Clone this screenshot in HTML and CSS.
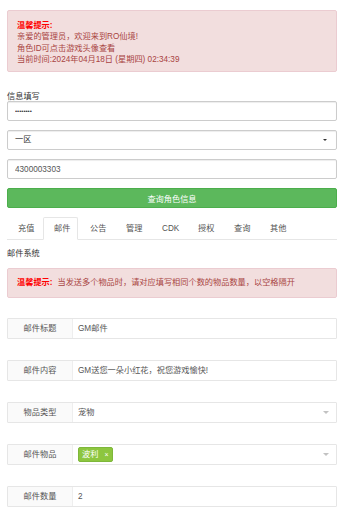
FILE: index.html
```html
<!DOCTYPE HTML>
<html>
<head>
    <meta charset="utf-8">
    <title>GM后台</title>
    <link rel="stylesheet" href="styles.css">
</head>
<body>
    <div class="container">
        <div class="alert alert-top">
            <div class="warn-title">温馨提示:</div>
            <div>亲爱的管理员，欢迎来到RO仙境!</div>
            <div>角色ID可点击游戏头像查看</div>
            <div>当前时间:2024年04月18日 (星期四) 02:34:39</div>
        </div>

        <label class="field-label">信息填写</label>
        <input type="password" class="form-control pwd" value="12345678">
        <div class="form-control select-box">
            <span>一区</span>
            <span class="caret"></span>
        </div>
        <input type="text" class="form-control" value="4300003303">
        <button class="btn-green">查询角色信息</button>

        <ul class="nav-tabs">
            <li>充值</li>
            <li class="active">邮件</li>
            <li>公告</li>
            <li>管理</li>
            <li>CDK</li>
            <li>授权</li>
            <li>查询</li>
            <li>其他</li>
        </ul>

        <div class="section-title">邮件系统</div>
        <div class="alert alert-tip">
            <span class="warn-title">温馨提示:</span>
            <span class="tip-text">当发送多个物品时，请对应填写相同个数的物品数量，以空格隔开</span>
        </div>

        <div class="form-item">
            <div class="item-label">邮件标题</div>
            <div class="item-input">GM邮件</div>
        </div>
        <div class="form-item">
            <div class="item-label">邮件内容</div>
            <div class="item-input">GM送您一朵小红花，祝您游戏愉快!</div>
        </div>
        <div class="form-item">
            <div class="item-label">物品类型</div>
            <div class="item-input">宠物<span class="edge"></span></div>
        </div>
        <div class="form-item">
            <div class="item-label">邮件物品</div>
            <div class="item-input"><span class="tag">波利<i>×</i></span><span class="edge"></span></div>
        </div>
        <div class="form-item">
            <div class="item-label">邮件数量</div>
            <div class="item-input">2</div>
        </div>
    </div>
</body>
</html>
```

FILE: styles.css
```css
*{
    box-sizing: border-box;
}
body{
    margin: 0;
    font-family: "Liberation Sans", "Noto Sans CJK SC", sans-serif;
    font-size: 8.2px;
    line-height: 11.4px;
    color: #333;
    background: #fff;
}
.container{
    padding: 10px 7px 0 7px;
}
.alert{
    background-color: #f2dede;
    border: 1px solid #ebccd1;
    border-radius: 2px;
    color: #a94442;
}
.alert-top{
    height: 62px;
    padding: 9px 9px;
    margin-bottom: 19px;
}
.warn-title{
    color: #f00;
    font-weight: bold;
}
.field-label{
    display: block;
    height: 10px;
    line-height: 11px;
    color: #333;
}
.form-control{
    display: block;
    width: 100%;
    height: 20px;
    margin: 0 0 9px 0;
    padding: 0 7px;
    border: 1px solid #ccc;
    border-radius: 2px;
    font-family: "Liberation Sans", "Noto Sans CJK SC", sans-serif;
    font-size: 8.2px;
    color: #555;
    background: #fff;
    box-shadow: inset 0 1px 1px rgba(0,0,0,.075);
}
.pwd{
    font-size: 6px;
    color: #333;
}
.select-box{
    display: flex;
    align-items: center;
    justify-content: space-between;
    color: #333;
}
.caret{
    width: 0;
    height: 0;
    border-left: 2px solid transparent;
    border-right: 2px solid transparent;
    border-top: 2px solid #333;
    margin-right: 2px;
}
.btn-green{
    display: block;
    width: 100%;
    height: 20px;
    border: 1px solid #4cae4c;
    border-radius: 2px;
    background: #5cb85c;
    color: #fff;
    font-family: "Liberation Sans", "Noto Sans CJK SC", sans-serif;
    font-size: 8.2px;
    padding: 0;
}
.nav-tabs{
    list-style: none;
    margin: 9px 0 0 0;
    padding: 0;
    display: flex;
    border-bottom: 1px solid #e6e6e6;
}
.nav-tabs li{
    width: 35px;
    margin-right: 1px;
    height: 23px;
    line-height: 22px;
    padding-left: 10px;
    color: #555;
    border: 1px solid transparent;
    border-radius: 2px 2px 0 0;
    margin-bottom: -1px;
}
.nav-tabs li.active{
    border-color: #e6e6e6;
    border-bottom-color: #fff;
    background: #fff;
}
.section-title{
    margin-top: 8px;
    height: 11px;
}
.alert-tip{
    margin-top: 9px;
    height: 30px;
    padding: 0 9px;
    display: flex;
    align-items: center;
}
.tip-text{
    margin-left: 5px;
}
.form-item{
    display: flex;
    height: 21px;
    margin-top: 21px;
    border: 1px solid #e6e6e6;
    border-radius: 1px;
}
.alert-tip + .form-item{
    margin-top: 20px;
}
.item-label{
    width: 65px;
    background: #fafafa;
    border-right: 1px solid #eee;
    text-align: center;
    line-height: 19px;
    color: #555;
}
.item-input{
    flex: 1;
    position: relative;
    display: flex;
    align-items: center;
    padding-left: 5px;
    color: #555;
    background: #fff;
}
.edge{
    position: absolute;
    right: 7px;
    top: 8px;
    width: 0;
    height: 0;
    border-left: 3px solid transparent;
    border-right: 3px solid transparent;
    border-top: 3px solid #c2c2c2;
}
.tag{
    display: inline-flex;
    align-items: center;
    height: 15px;
    padding: 0 4px 0 3px;
    background: #8dc63f;
    border: 1px solid #7eb73a;
    border-radius: 2px;
    color: #fff;
}
.tag i{
    font-style: normal;
    margin-left: 6px;
    font-size: 7px;
}
```
